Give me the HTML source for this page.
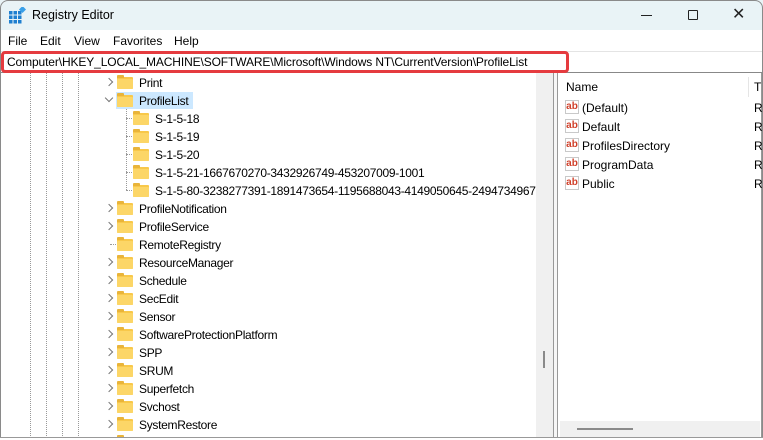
<!DOCTYPE html>
<html style="overflow:hidden"><head><style>
*{margin:0;padding:0;box-sizing:border-box}
html,body{width:763px;height:440px;overflow:hidden}
body{background:#fff;font-family:"Liberation Sans",sans-serif;font-size:12px;color:#000;position:relative}
.a{position:absolute;white-space:nowrap}
.dl{position:absolute;width:0;border-left:1px dotted #999}
.dh{position:absolute;height:0;border-top:1px dotted #999}
.f{position:absolute;width:16px;height:12px;background:#f8c84a;border-radius:1px}
.f:before{content:"";position:absolute;left:0;top:-2px;width:7px;height:3px;background:#e9b43a;border-radius:1px 1px 0 0}
.f:after{content:"";position:absolute;left:0;top:2px;width:16px;height:10px;background:#fcd667;border-radius:1px}
.ch{position:absolute;width:6px;height:6px;border-right:1.3px solid #777;border-bottom:1.3px solid #777;transform:rotate(-45deg)}
.ab{position:absolute;width:14px;height:14px;border:1px solid #c9c9c9;background:#fff;color:#d0402a;font-size:10px;font-weight:bold;line-height:11px;text-align:center}
#t{position:absolute;left:0;top:73px;width:536px;height:364px;overflow:hidden}
</style></head><body>
<div class="a" style="left:0;top:0;width:763px;height:30px;background:#e9f3f6"></div>
<div class="a" style="left:0;top:0;width:763px;height:440px;border:1px solid #8a8a8a;border-radius:8px 8px 0 0;border-bottom:none"></div>
<svg class="a" style="left:9px;top:7px" width="17" height="17" viewBox="0 0 17 17"><g fill="#1e7fd0"><rect x="0" y="4" width="3.5" height="3.5"/><rect x="4.5" y="4" width="3.5" height="3.5"/><rect x="9" y="4" width="3.5" height="3.5"/><rect x="0" y="8.5" width="3.5" height="3.5"/><rect x="4.5" y="8.5" width="3.5" height="3.5"/><rect x="9" y="8.5" width="3.5" height="3.5"/><rect x="0" y="13" width="3.5" height="3.5"/><rect x="4.5" y="13" width="3.5" height="3.5"/><rect x="9" y="13" width="3.5" height="3.5"/></g><rect x="11" y="0" width="5" height="5" fill="#3aa0e8" transform="rotate(45 13.5 2.5)"/></svg>
<div class="a" style="left:32px;top:8px;font-size:12.5px">Registry Editor</div>
<div class="a" style="left:641px;top:15px;width:11px;border-top:1px solid #222"></div>
<div class="a" style="left:688px;top:10px;width:10px;height:10px;border:1px solid #222;border-radius:1px"></div>
<div class="a" style="left:732px;top:7px;font-size:16px;line-height:16px;color:#222">✕</div>
<div class="a" style="left:8px;top:34px">File</div>
<div class="a" style="left:40px;top:34px">Edit</div>
<div class="a" style="left:74px;top:34px">View</div>
<div class="a" style="left:113px;top:34px">Favorites</div>
<div class="a" style="left:174px;top:34px">Help</div>
<div class="a" style="left:1px;top:51px;width:761px;height:22px;border-top:1px solid #e4e4e4"></div>
<div class="a" style="left:1px;top:72px;width:761px;border-top:1px solid #888"></div>
<div class="a" style="left:1px;top:51px;width:568px;height:22px;border:3px solid #e53b3f;border-radius:4px"></div>
<div class="a" style="left:7px;top:55px;font-size:12px;letter-spacing:-0.12px">Computer\HKEY_LOCAL_MACHINE\SOFTWARE\Microsoft\Windows NT\CurrentVersion\ProfileList</div>
<div id="t">
<div class="dl" style="left:30px;top:0;height:365px"></div>
<div class="dl" style="left:46px;top:0;height:365px"></div>
<div class="dl" style="left:62px;top:0;height:365px"></div>
<div class="dl" style="left:78px;top:0;height:365px"></div>
<div class="dl" style="left:126px;top:36px;height:81px"></div>
<div class="a" style="left:116px;top:19px;width:77px;height:17px;background:#cce8ff"></div>
<div id="r"></div>
</div>
<div class="a" style="left:536px;top:73px;width:17px;height:365px;background:#f0f0f0"></div>
<div class="a" style="left:543px;top:351px;width:2px;height:17px;background:#8a8a8a"></div>
<div class="a" style="left:553px;top:73px;width:5px;height:365px;border-left:1px solid #999;border-right:1px solid #999;background:#f7f7f7"></div>
<div class="a" style="left:558px;top:73px;width:204px;height:365px;border-right:1px solid #999"></div>
<div class="a" style="left:566px;top:80px">Name</div>
<div class="a" style="left:748px;top:77px;height:20px;border-left:1px solid #e5e5e5"></div>
<div class="a" style="left:754px;top:80px">T</div>
<div class="a" style="left:560px;top:421px;width:200px;height:16px;background:#f0f0f0"></div>
<div class="a" style="left:577px;top:428px;width:56px;height:2px;background:#8a8a8a"></div>
<div class="a" style="left:0;top:437px;width:763px;height:3px;border-top:1px solid #999;background:#fff"></div>
<script>
var rows=[["Print",82,1,1],["ProfileList",100,1,2],["S-1-5-18",118,2,0],["S-1-5-19",136,2,0],["S-1-5-20",154,2,0],["S-1-5-21-1667670270-3432926749-453207009-1001",172,2,0],["S-1-5-80-3238277391-1891473654-1195688043-4149050645-2494734967",190,2,0],["ProfileNotification",208,1,1],["ProfileService",226,1,1],["RemoteRegistry",244,1,0],["ResourceManager",262,1,1],["Schedule",280,1,1],["SecEdit",298,1,1],["Sensor",316,1,1],["SoftwareProtectionPlatform",334,1,1],["SPP",352,1,1],["SRUM",370,1,1],["Superfetch",388,1,1],["Svchost",406,1,1],["SystemRestore",424,1,1],["",442,1,0]];
var h="";
rows.forEach(function(r){var fx=r[2]==1?117:133,y=r[1]-73;
if(r[2]==2)h+='<div class="dh" style="left:126px;top:'+y+'px;width:6px"></div>';
if(r[2]==1&&r[3]==0)h+='<div class="dh" style="left:110px;top:'+y+'px;width:6px"></div>';
if(r[3]==1)h+='<div class="ch" style="left:106px;top:'+(y-3)+'px"></div>';
if(r[3]==2)h+='<div class="ch" style="left:106px;top:'+(y-5)+'px;transform:rotate(45deg)"></div>';
h+='<div class="f" style="left:'+fx+'px;top:'+(y-5)+'px"></div>';
h+='<div class="a" style="left:'+(fx+22)+'px;top:'+(y-6)+'px;letter-spacing:-0.3px">'+r[0]+'</div>';});
document.getElementById("r").innerHTML=h;
var g="";
[["(Default)",107],["Default",126],["ProfilesDirectory",145],["ProgramData",164],["Public",183]].forEach(function(r){
g+='<div class="ab" style="left:565px;top:'+(r[1]-7)+'px">ab</div><div class="a" style="left:582px;top:'+(r[1]-6)+'px">'+r[0]+'</div><div class="a" style="left:754px;top:'+(r[1]-6)+'px">R</div>';});
document.body.insertAdjacentHTML("beforeend",g);
</script>
</body></html>
